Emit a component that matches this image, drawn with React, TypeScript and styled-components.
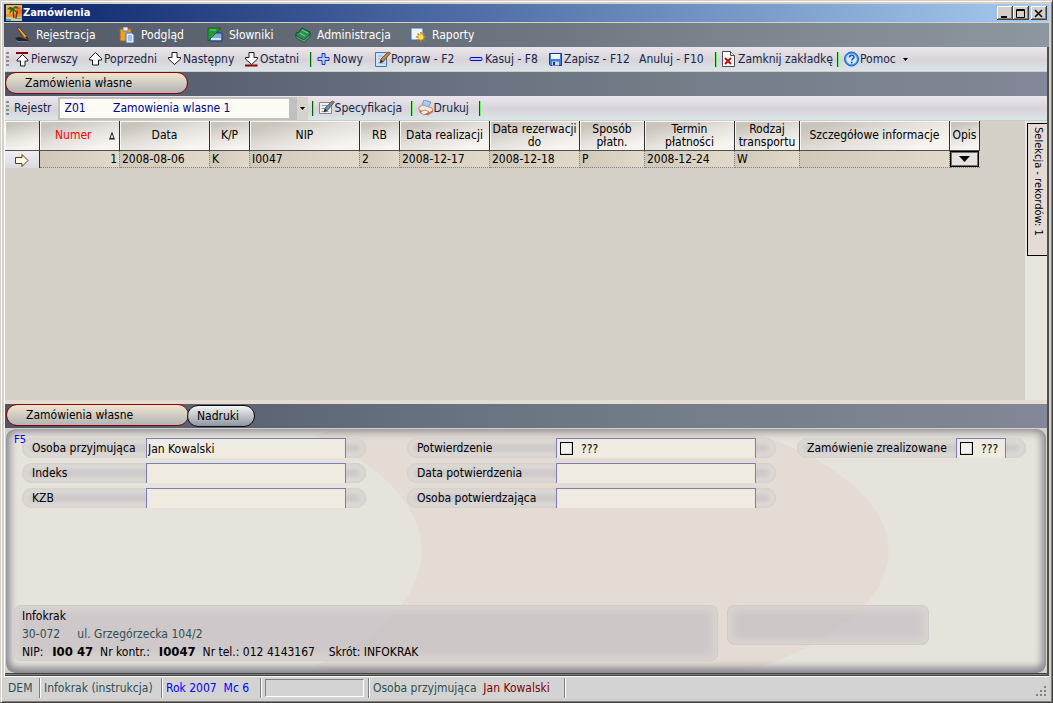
import React from "react";
import styled, { createGlobalStyle } from "styled-components";

const Global = createGlobalStyle`
  *, *::before, *::after { box-sizing: border-box; }
  body { margin: 0; background: #d4d0c8; }
  body, button, input, select {
    font-family: "DejaVu Sans Condensed", "Noto Sans", sans-serif;
    font-size: 12px;
    line-height: 14px;
    color: #000;
  }
  button { cursor: default; }
`;

const Window = styled.div`
  min-height: 100vh;
  display: flex;
  flex-direction: column;
  padding: 2px;
  background: #d4d0c8;
  border: 1px solid;
  border-color: #d4d0c8 #404040 #404040 #d4d0c8;
  box-shadow: inset 1px 1px 0 #fff, inset -1px -1px 0 #808080;
`;

const Frame = styled.div`
  flex: 1;
  display: flex;
  flex-direction: column;
  padding: 1px;
`;

const TitleBar = styled.header`
  height: 19px;
  flex: none;
  display: flex;
  align-items: center;
  gap: 1px;
  padding: 0 2px;
  border-bottom: 1px solid #d4d0c8;
  background: linear-gradient(90deg, #0a246a, #a6caf0);
`;

const Title = styled.h1`
  flex: 1;
  margin: 0;
  font-size: 11px;
  font-weight: bold;
  color: #fff;
`;

const CaptionButton = styled.button<{ $gap?: boolean }>`
  width: 16px;
  height: 14px;
  margin-left: ${(p) => (p.$gap ? "1px" : "-1px")};
  padding: 0;
  border: 0;
  background: #d4d0c8;
  box-shadow: inset -1px -1px 0 #404040, inset 1px 1px 0 #fff, inset -2px -2px 0 #808080;
  display: grid;
  place-items: center;
`;

const MenuBar = styled.nav`
  height: 24px;
  flex: none;
  display: flex;
  align-items: center;
  padding: 0 10px;
  background: linear-gradient(90deg, #535967, #6d7680 50%, #808791 75%, #8c97a0);
`;

const MenuItem = styled.button<{ $width: number }>`
  display: flex;
  flex: 0 0 ${(p) => p.$width}px;
  align-items: center;
  gap: 6px;
  padding: 0;
  border: 0;
  background: none;
  color: #fff;
`;

const Body = styled.main`
  flex: 1;
  display: flex;
  flex-direction: column;
  border-left: 1px solid #fff;
  border-right: 2px solid #505050;
`;

const ToolBar = styled.div`
  height: 25px;
  flex: none;
  display: flex;
  align-items: center;
  padding: 0 1px;
  border-bottom: 1px solid #d0ccc4;
  background: linear-gradient(#ebe6ed, #d9d3d9 55%, #dae6ea);
`;

const Grip = styled.span`
  width: 3px;
  height: 14px;
  margin-right: 1px;
  background: repeating-linear-gradient(#8f8b93 0 2px, transparent 2px 4px);
`;

const ToolButton = styled.button<{ $width: number }>`
  display: flex;
  flex: 0 0 ${(p) => p.$width}px;
  min-width: 0;
  align-items: center;
  padding: 0 5px;
  border: 0;
  background: none;
  color: #14284b;
  white-space: nowrap;
  svg { flex: none; }
`;

const Separator = styled.span`
  width: 2px;
  height: 15px;
  margin-left: 4px;
  border-left: 1px solid #006400;
  border-right: 1px solid #70f070;
`;

const TabStrip = styled.div<{ $inset?: boolean }>`
  height: 24px;
  flex: none;
  display: flex;
  align-items: flex-start;
  padding-left: ${(p) => (p.$inset ? "1px" : "0")};
  background: linear-gradient(90deg, #4f5565, #697381 45%, #727c87 62%, #838797);
`;

const Tab = styled.button<{ $active?: boolean }>`
  height: 22px;
  width: ${(p) => (p.$active ? "183px" : "68px")};
  margin: ${(p) => (p.$active ? "0" : "1px 0 0 -2px")};
  padding: 0 ${(p) => (p.$active ? "19px" : "9px")};
  text-align: left;
  border: 1px solid ${(p) => (p.$active ? "#8b0000" : "#101010")};
  border-radius: 11px;
  background: ${(p) => (p.$active ? "linear-gradient(#f0e6cf, #b2b3b6)" : "linear-gradient(#f4f4f4, #8f949f)")};
`;

const RegisterLabel = styled.label`
  padding: 0 6px 0 4px;
  color: #14284b;
`;

const ComboFrame = styled.span`
  display: flex;
  height: 23px;
  padding: 2px 0 2px 2px;
  background: #c0c0c0;
`;

const Combo = styled.select`
  appearance: none;
  width: 229px;
  height: 19px;
  padding: 0 5px;
  border: 0;
  background: #fcfbf6;
  color: #00008b;
`;

const ComboArrow = styled.span`
  display: grid;
  place-items: center;
  width: 11px;
  height: 23px;
  margin: -2px 0 0 8px;
  background: #d6d2cc;
`;

const GridArea = styled.section`
  flex: 1;
  display: flex;
  justify-content: space-between;
  background: #d4d0c8;
  border-bottom: 4px solid #e4dcd1;
`;

const Table = styled.table`
  flex: none;
  align-self: flex-start;
  width: 975px;
  table-layout: fixed;
  border-collapse: separate;
  border-spacing: 0;
`;

const Th = styled.th<{ $sorted?: boolean }>`
  height: 30px;
  padding: 0;
  font-weight: normal;
  line-height: 13px;
  text-align: center;
  color: ${(p) => (p.$sorted ? "#f00" : "#000")};
  border-right: 1px solid #303030;
  border-bottom: 1px solid #505050;
  box-shadow: inset 1px 1px 0 #f8f6f2;
  background: linear-gradient(165deg, #c9c5bd 15%, #e4e0db 50%, #f8f5f1 85%);
`;

const SortCell = styled.span`
  display: flex;
  align-items: center;
  justify-content: space-between;
  padding: 0 4px 0 15px;
`;

const Td = styled.td<{ $right?: boolean }>`
  height: 17px;
  padding: 0 2px;
  text-align: ${(p) => (p.$right ? "right" : "left")};
  border-right: 1px dotted #808080;
  border-bottom: 1px dotted #808080;
  background: linear-gradient(90deg, #d0c8b9, #e1dacb);
`;

const MarkerCell = styled.th`
  height: 17px;
  padding: 0;
  border-right: 1px solid #303030;
  background: linear-gradient(#f0edf5, #dcd8e0);
  svg { display: block; margin: 0 auto; }
`;

const ActionCell = styled.td`
  padding: 0;
  border-bottom: 1px dotted #808080;
`;

const DropButton = styled.button`
  display: grid;
  place-items: center;
  width: 29px;
  height: 16px;
  padding: 0;
  border: 1px solid #000;
  background: #e6e2dd;
  box-shadow: inset 0 0 0 1px #706e6a;
`;

const SideRail = styled.aside`
  width: 22px;
  padding: 2px 0 0 2px;
  background: #e8e4de;
`;

const SideTab = styled.button`
  width: 20px;
  height: 133px;
  padding: 3px 0;
  border: 1px solid #000;
  border-right: 0;
  background: #e4dbd5;
  writing-mode: vertical-rl;
  text-align: left;
  font-size: 11px;
  white-space: nowrap;
`;

const Panel = styled.section`
  position: relative;
  flex: none;
  height: 244px;
  display: flex;
  flex-direction: column;
  justify-content: space-between;
  margin: 1px 1px 0;
  padding: 9px 16px 12px 8px;
  border-radius: 9px;
  overflow: hidden;
  background:
    radial-gradient(ellipse 300px 150px at 116px 50%, #e6e2dc 99.7%, transparent 100%),
    radial-gradient(ellipse 350px 150px at 533px 50%, #e3dbd4 99.7%, transparent 100%),
    #e6e2dc;
  box-shadow: inset 0 0 10px 2px #8c8c92, inset 0 -3px 10px 0 #77777e;
`;

const PanelEdge = styled.div`
  height: 3px;
  flex: none;
  border-top: 1px solid #404040;
  border-bottom: 1px solid #404040;
  background: #808080;
`;

const Shortcut = styled.span`
  position: absolute;
  left: 8px;
  top: 4px;
  color: #00f;
  font-size: 11px;
`;

const Fields = styled.div`
  display: flex;
  align-items: flex-start;
  padding-left: 8px;
`;

const FieldGroup = styled.div<{ $width: number; $after: number }>`
  display: flex;
  flex-direction: column;
  gap: 5px;
  width: ${(p) => p.$width}px;
  margin-right: ${(p) => p.$after}px;
`;

const FieldRow = styled.div`
  display: flex;
  height: 20px;
  padding: 0 20px 0 10px;
  border-radius: 10px;
  background: #cdc8c8;
  box-shadow: inset 0 0 3px 1px #d2ceca, inset 0 0 5px 6px #dedad6;
`;

const FieldLabel = styled.label`
  flex: 1;
  line-height: 21px;
  white-space: nowrap;
`;

const TextBox = styled.input`
  width: 200px;
  height: 20px;
  padding: 0 1px;
  border: 1px solid #7c7cb8;
  border-bottom: 0;
  border-radius: 0;
  background: #efebe0;
  outline: 0;
`;

const CheckFrame = styled.span<{ $width: number }>`
  display: flex;
  align-items: center;
  gap: 8px;
  width: ${(p) => p.$width}px;
  padding-left: 3px;
  border: 1px solid #7c7cb8;
  border-bottom: 0;
  background: #efebe0;
`;

const Check = styled.input`
  appearance: none;
  width: 13px;
  height: 13px;
  margin: 0;
  border: 1px solid #000;
  background: #f4f2ee;
  box-shadow: inset -1px -1px 0 #d8d5ce;
`;

const InfoRow = styled.div`
  display: flex;
  align-items: flex-start;
  gap: 9px;
`;

const InfoBox = styled.div<{ $small?: boolean }>`
  width: ${(p) => (p.$small ? "202px" : "704px")};
  height: ${(p) => (p.$small ? "40px" : "56px")};
  padding: 2px 8px;
  border-radius: 8px;
  line-height: 18px;
  white-space: pre;
  background: rgba(190, 184, 190, 0.6);
  box-shadow: inset 0 0 0 1px rgba(205, 201, 202, 0.7), inset 0 0 9px 5px #dbd6d1;
  b {
    margin-left: 2px;
    font-size: 13px;
    line-height: 14px;
  }
`;

const Address = styled.div`
  color: #2f4f4f;
`;

const StatusBar = styled.footer`
  height: 23px;
  flex: none;
  display: flex;
  align-items: center;
  border-top: 1px solid #fff;
  background: #d3d3d3;
  color: #2f4f4f;
`;

const StatusCell = styled.span<{ $width: number; $color?: string }>`
  width: ${(p) => p.$width}px;
  height: 20px;
  padding: 0 4px;
  line-height: 20px;
  white-space: pre;
  color: ${(p) => p.$color ?? "#2f4f4f"};
  border-right: 1px solid #808080;
  box-shadow: 1px 0 0 #fff;
`;

const Progress = styled.span`
  display: block;
  height: 18px;
  margin: 1px 0;
  border: 1px solid;
  border-color: #808080 #fff #fff #808080;
`;

const Maroon = styled.span`
  color: #800000;
`;

const SizeGrip = styled.svg`
  margin: 6px 2px 0 auto;
`;

const Icon = ({ children }: { children: React.ReactNode }) => (
  <svg width={16} height={16} viewBox="0 0 16 16" aria-hidden="true">
    {children}
  </svg>
);

const UpArrow = ({ limit }: { limit?: boolean }) => (
  <Icon>
    <path d={limit ? "M7.5 3.5L13 9v1h-3v5H5.500v-5H2V9z" : "M7.500 1.500L13.500 7.500v1.500h-3v5h-6V9h-3V7.500z"} fill="#fff" stroke="#1c1c1c" strokeLinejoin="round" />
    {limit && <path d="M1 1h12v2H1z" fill="#8b0000" />}
  </Icon>
);

const DownArrow = ({ limit }: { limit?: boolean }) => (
  <Icon>
    <path d="M5 1.500h5v5h3.500v1.500L7.500 13.500 1.500 8V6.500H5z" fill="#fff" stroke="#1c1c1c" strokeLinejoin="round" />
    {limit && <path d="M1 13.500h12.500v2H1z" fill="#8b0000" />}
  </Icon>
);

const PalmIcon = () => (
  <Icon>
    <path d="M0 0h16v16H0z" fill="#f7b03a" />
    <path d="M10 2a4 4 0 0 1 6 3v5h-6z" fill="#ef6a2c" />
    <path d="M0 9h16v3H0z" fill="#f08a3a" />
    <path d="M0 12h16v4H0z" fill="#d9c98a" />
    <path d="M0 14h5v2H0zM9 13h7v1H9z" fill="#3fa6b5" />
    <path d="M7 4c1 3 0 6 1 9M11 6c0 3-1 5-1 7" stroke="#6b3a12" strokeWidth="1.500" fill="none" />
    <path d="M1 5c1-3 4-4 6-2 2-3 5-2 6 1-2-1-4-1-5 0 2 1 3 2 2 4-1-2-2-3-3-3-1 1-2 2-3 4-1-2 0-3 1-4-2-1-3-1-4 0z" fill="#1c6b2d" />
  </Icon>
);

const StampIcon = () => (
  <Icon>
    <path d="M1 11l4-1 10 3-2 2H5z" fill="#20232a" />
    <path d="M3 14.500h11" stroke="#a9adb8" strokeWidth=".6" />
    <path d="M3 .5L5.500 1 13 9.500l1 3-3.500-1z" fill="#d9822b" stroke="#5b2f0d" strokeWidth=".7" />
    <path d="M4.500 1.500l7 8" stroke="#f6bd77" />
    <path d="M11 10.500l3 2-1-3z" fill="#402008" />
  </Icon>
);

const ClipboardIcon = () => (
  <Icon>
    <path d="M1 2h11v12H1z" fill="#e9a12e" stroke="#a2640f" />
    <path d="M4 0h5v4H4z" fill="#e5e8ef" stroke="#6d7485" strokeWidth=".8" />
    <path d="M7 6h6l2 2v8H7z" fill="#dfeaff" stroke="#4a72b5" />
    <path d="M9 9h4M9 11h4M9 13h4" stroke="#6a91d0" />
  </Icon>
);

const DictionaryIcon = () => (
  <Icon>
    <path d="M3 6h12v8H3z" fill="#7fa8e0" stroke="#173a7a" />
    <path d="M4 11h10v2H4z" fill="#dbe7fa" />
    <path d="M1 1h13L1 14z" fill="#1e9a36" stroke="#0a5a1a" strokeWidth=".7" />
    <path d="M3 3h6" stroke="#69d87c" />
  </Icon>
);

const BookIcon = () => (
  <Icon>
    <path d="M1 6l3-1 3-4 8 4v3l-6 6-8-5z" fill="#2f8d54" stroke="#0e4a27" />
    <path d="M1 8.500V11l8 4.500L15 10V7.500L9 13z" fill="#5f9a76" stroke="#0e4a27" strokeWidth=".7" />
    <path d="M7 3l6 3M5 6l5 3" stroke="#7fd39b" />
  </Icon>
);

const ReportIcon = () => (
  <Icon>
    <path d="M1 1h12v12H1z" fill="#eef4ff" stroke="#3e6db0" />
    <path d="M11 5v10M6 10h10M7.500 6.500l7 7M14.500 6.500l-7 7" stroke="#c98a00" strokeWidth="1.500" />
    <circle cx="11" cy="10" r="2.500" fill="#ffe760" />
  </Icon>
);

const EditIcon = ({ gray }: { gray?: boolean }) => (
  <Icon>
    <path d={gray ? "M.5 2.500h12v11H.5z" : "M.5 1.500h11v14H.5z"} fill={gray ? "#f0f0ee" : "#cfe2fb"} stroke={gray ? "#85878c" : "#4a72b5"} />
    <path d={gray ? "M2.500 5.500h6M2.500 8.500h4M2.500 11.500h7" : "M3 5h5M3 8h3M3 12h7"} stroke={gray ? "#999" : "#8db4ea"} />
    <path d="M5 12l1-4 7-7 2.500 1-7 8.500z" fill={gray ? "#6c87a8" : "#c78240"} stroke={gray ? "#3d4d63" : "#553010"} strokeWidth=".7" />
    <path d="M5 12l1-3 2 1.500z" fill="#222" />
    {gray && <path d="M12 2l1.500-1.500 2 1.500L14 4z" fill="#c06a3a" />}
  </Icon>
);

const PlusIcon = () => (
  <Icon>
    <path d="M5 2.500h3v4h4v3H8v4H5v-4H1v-3h4z" fill="#b7cdfc" stroke="#1438b8" strokeLinejoin="round" />
  </Icon>
);

const MinusIcon = () => (
  <Icon>
    <rect x="1" y="6.500" width="12" height="3" rx="1" fill="#b7cdfc" stroke="#0a0ab0" />
  </Icon>
);

const SaveIcon = () => (
  <Icon>
    <path d="M1.500 2.500h12v12h-11l-1-1z" fill="#3f7fe0" stroke="#123a86" />
    <path d="M3 3h9v5H3z" fill="#f1f6ff" />
    <path d="M4 10.500h7v4H4z" fill="#c9d8ef" />
    <path d="M5 11h2v3H5z" fill="#123a86" />
  </Icon>
);

const CloseDocIcon = () => (
  <Icon>
    <path d="M.5.5h8l4 4v11H.5z" fill="#fafafa" stroke="#4d4d55" />
    <path d="M8.500.5v4h4" fill="#ddd" stroke="#4d4d55" />
    <path d="M3 7l6 6M9 7l-6 6" stroke="#c01010" strokeWidth="2" />
  </Icon>
);

const HelpIcon = () => (
  <Icon>
    <circle cx="7.500" cy="8" r="7" fill="#3f95ee" stroke="#1c62c4" />
    <circle cx="7.500" cy="8" r="5.300" fill="#d4eafe" />
    <path d="M5.500 6.500c0-3 4.500-3 4.500-.3C10 7.700 7.700 7.700 7.700 9.500M7.700 10.700v1.700" stroke="#1557bb" strokeWidth="1.600" fill="none" />
  </Icon>
);

const PrinterIcon = () => (
  <Icon>
    <path d="M6 0l7 2-3 6-6-3z" fill="#a9ccfa" stroke="#5b88c9" strokeWidth=".8" />
    <path d="M1 7l4-2 9 3 1 3-5 3-9-4z" fill="#f2e7dc" stroke="#a58468" strokeWidth=".8" />
    <path d="M1 10l9 3 5-3v2l-5 3.500L2 13z" fill="#c2745a" />
    <path d="M2 12l5-2 4 2-5 3z" fill="#fff" stroke="#c0452e" strokeWidth=".7" />
  </Icon>
);

const Caret = ({ wide }: { wide?: boolean }) => (
  <svg width={wide ? 11 : 5} height={wide ? 6 : 3} viewBox="0 0 10 6" preserveAspectRatio="none" aria-hidden="true">
    <path d="M0 0h10L5 6z" />
  </svg>
);

const columns: { label: React.ReactNode; width: number; value: string }[] = [
  { label: "Numer", width: 80, value: "1" },
  { label: "Data", width: 90, value: "2008-08-06" },
  { label: "K/P", width: 40, value: "K" },
  { label: "NIP", width: 110, value: "I0047" },
  { label: "RB", width: 40, value: "2" },
  { label: "Data realizacji", width: 90, value: "2008-12-17" },
  { label: <>Data rezerwacji<br />do</>, width: 90, value: "2008-12-18" },
  { label: <>Sposób<br />płatn.</>, width: 65, value: "P" },
  { label: <>Termin<br />płatności</>, width: 90, value: "2008-12-24" },
  { label: <>Rodzaj<br />transportu</>, width: 65, value: "W" },
  { label: "Szczegółowe informacje", width: 150, value: "" },
];

const menu = [
  { label: "Rejestracja", icon: <StampIcon />, width: 105 },
  { label: "Podgląd", icon: <ClipboardIcon />, width: 88 },
  { label: "Słowniki", icon: <DictionaryIcon />, width: 88 },
  { label: "Administracja", icon: <BookIcon />, width: 115 },
  { label: "Raporty", icon: <ReportIcon />, width: 88 },
];

const TextField = ({ id, label, value = "" }: { id: string; label: string; value?: string }) => (
  <FieldRow>
    <FieldLabel htmlFor={id}>{label}</FieldLabel>
    <TextBox id={id} type="text" defaultValue={value} />
  </FieldRow>
);

const CheckField = ({ id, label, width }: { id: string; label: string; width: number }) => (
  <FieldRow>
    <FieldLabel htmlFor={id}>{label}</FieldLabel>
    <CheckFrame $width={width}>
      <Check id={id} type="checkbox" />
      ???
    </CheckFrame>
  </FieldRow>
);

export default function App() {
  return (
    <>
      <Global />
      <Window>
        <Frame>
          <TitleBar>
            <PalmIcon />
            <Title>Zamówienia</Title>
            <CaptionButton aria-label="Minimalizuj">
              <svg width="10" height="9"><path d="M1 7h6v2H1z" /></svg>
            </CaptionButton>
            <CaptionButton aria-label="Maksymalizuj">
              <svg width="10" height="9"><path d="M.5.5h8v8h-8zM.5 1.500h8" fill="none" stroke="#000" /></svg>
            </CaptionButton>
            <CaptionButton aria-label="Zamknij" $gap>
              <svg width="10" height="9"><path d="M1 1l7 7M8 1l-7 7" stroke="#000" strokeWidth="1.600" /></svg>
            </CaptionButton>
          </TitleBar>
          <MenuBar>
            {menu.map((m) => (
              <MenuItem key={m.label} $width={m.width}>{m.icon}{m.label}</MenuItem>
            ))}
          </MenuBar>
          <Body>
            <ToolBar>
              <Grip />
              <ToolButton $width={73}><UpArrow limit />Pierwszy</ToolButton>
              <ToolButton $width={79}><UpArrow />Poprzedni</ToolButton>
              <ToolButton $width={77}><DownArrow />Następny</ToolButton>
              <ToolButton $width={67}><DownArrow limit />Ostatni</ToolButton>
              <Separator />
              <ToolButton $width={58}><PlusIcon />Nowy</ToolButton>
              <ToolButton $width={94}><EditIcon />Popraw - F2</ToolButton>
              <ToolButton $width={79}><MinusIcon />Kasuj - F8</ToolButton>
              <ToolButton $width={91}><SaveIcon />Zapisz - F12</ToolButton>
              <ToolButton $width={77}>Anuluj - F10</ToolButton>
              <Separator />
              <ToolButton $width={116}><CloseDocIcon />Zamknij zakładkę</ToolButton>
              <Separator />
              <ToolButton $width={64}><HelpIcon />Pomoc</ToolButton>
              <Caret />
            </ToolBar>
            <TabStrip>
              <Tab $active>Zamówienia własne</Tab>
            </TabStrip>
            <ToolBar>
              <Grip />
              <RegisterLabel htmlFor="rejestr">Rejestr</RegisterLabel>
              <ComboFrame>
                <Combo id="rejestr">
                  <option>{"Z01" + "\u00a0".repeat(8) + "Zamowienia wlasne 1"}</option>
                </Combo>
                <ComboArrow><Caret /></ComboArrow>
              </ComboFrame>
              <Separator />
              <ToolButton $width={93}><EditIcon gray />Specyfikacja</ToolButton>
              <Separator />
              <ToolButton $width={62}><PrinterIcon />Drukuj</ToolButton>
              <Separator />
            </ToolBar>
            <GridArea>
              <Table>
                <colgroup>
                  <col width={35} />
                  {columns.map((c, i) => <col key={i} width={c.width} />)}
                  <col width={30} />
                </colgroup>
                <thead>
                  <tr>
                    <Th />
                    {columns.map((c, i) =>
                      i === 0 ? (
                        <Th key={i} $sorted>
                          <SortCell>
                            {c.label}
                            <svg width="6" height="8"><path d="M3 .5L5 6.500H1z" fill="none" stroke="#222" /><path d="M0 7h6" stroke="#222" /></svg>
                          </SortCell>
                        </Th>
                      ) : (
                        <Th key={i}>{c.label}</Th>
                      )
                    )}
                    <Th>Opis</Th>
                  </tr>
                </thead>
                <tbody>
                  <tr>
                    <MarkerCell scope="row">
                      <svg width="14" height="14" viewBox="0 0 14 14" aria-label="Bieżący rekord">
                        <path d="M.5 4.500H7V1.500l6 6-6 6V10.500H.5z" fill="#fffbe8" stroke="#5a3a10" />
                      </svg>
                    </MarkerCell>
                    {columns.map((c, i) => <Td key={i} $right={i === 0}>{c.value}</Td>)}
                    <ActionCell>
                      <DropButton aria-label="Opis"><Caret wide /></DropButton>
                    </ActionCell>
                  </tr>
                </tbody>
              </Table>
              <SideRail>
                <SideTab>Selekcja - rekordów: 1</SideTab>
              </SideRail>
            </GridArea>
            <TabStrip $inset>
              <Tab $active>Zamówienia własne</Tab>
              <Tab>Nadruki</Tab>
            </TabStrip>
            <Panel>
              <Shortcut>F5</Shortcut>
              <Fields>
                <FieldGroup $width={344} $after={41}>
                  <TextField id="osoba" label="Osoba przyjmująca" value="Jan Kowalski" />
                  <TextField id="indeks" label="Indeks" />
                  <TextField id="kzb" label="KZB" />
                </FieldGroup>
                <FieldGroup $width={369} $after={21}>
                  <CheckField id="potw" label="Potwierdzenie" width={200} />
                  <TextField id="datap" label="Data potwierdzenia" />
                  <TextField id="osobap" label="Osoba potwierdzająca" />
                </FieldGroup>
                <FieldGroup $width={229} $after={0}>
                  <CheckField id="zreal" label="Zamówienie zrealizowane" width={50} />
                </FieldGroup>
              </Fields>
              <InfoRow>
                <InfoBox>
                  <div>Infokrak</div>
                  <Address>{"30-072     ul. Grzegórzecka 104/2"}</Address>
                  <div>NIP:  <b>I00 47</b>  Nr kontr.:  <b>I0047</b>{"  Nr tel.: 012 4143167    Skrót: INFOKRAK"}</div>
                </InfoBox>
                <InfoBox $small />
              </InfoRow>
            </Panel>
            <PanelEdge />
          </Body>
          <StatusBar>
            <StatusCell $width={36}>DEM</StatusCell>
            <StatusCell $width={122}>Infokrak (instrukcja)</StatusCell>
            <StatusCell $width={99} $color="#00f">{"Rok 2007  Mc 6"}</StatusCell>
            <StatusCell $width={108}><Progress /></StatusCell>
            <StatusCell $width={196}>{"Osoba przyjmująca  "}<Maroon>Jan Kowalski</Maroon></StatusCell>
            <SizeGrip width="12" height="12">
              <path d="M9 1h2v2H9zM9 5h2v2H9zM9 9h2v2H9zM5 5h2v2H5zM5 9h2v2H5zM1 9h2v2H1z" fill="#808080" />
            </SizeGrip>
          </StatusBar>
        </Frame>
      </Window>
    </>
  );
}
